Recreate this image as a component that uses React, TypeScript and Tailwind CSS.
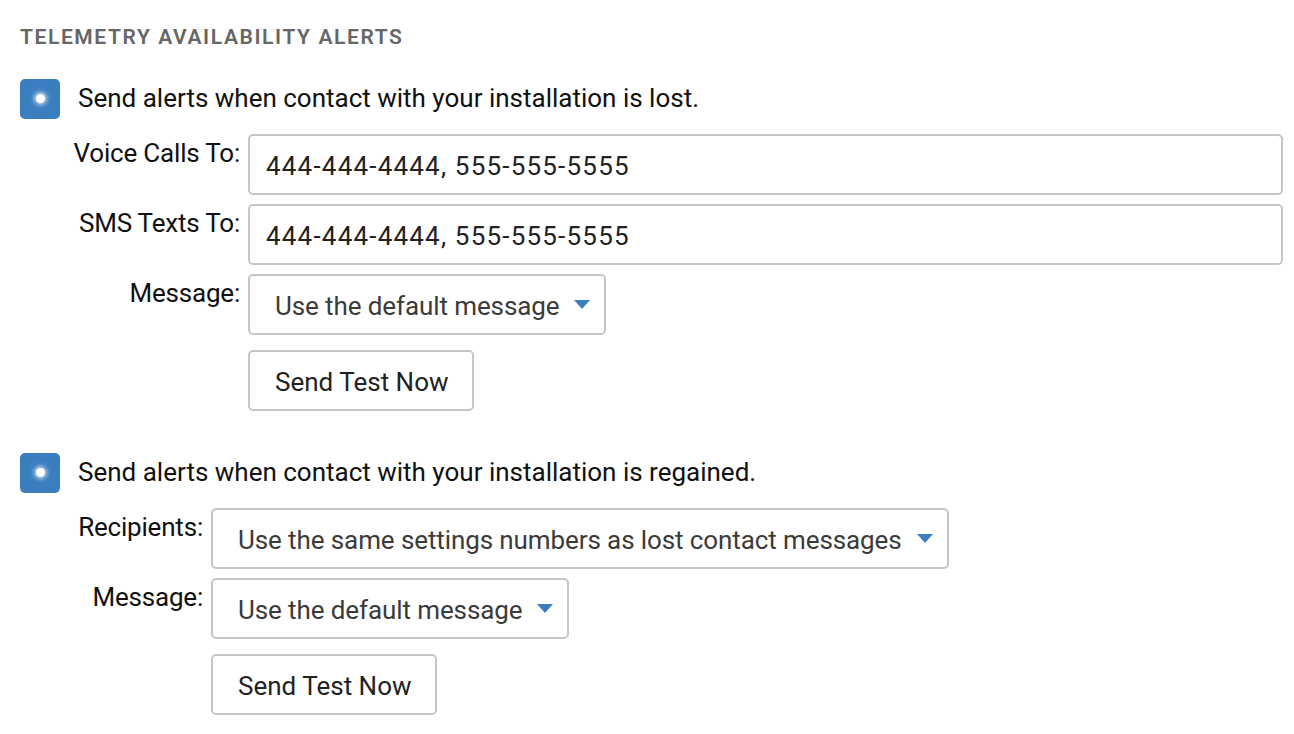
import { ReactNode } from 'react';

function Checkbox() {
  return (
    <div className="w-10 h-10 shrink-0 rounded-[5px] bg-[#3a7ebf] flex items-center justify-center">
      <div className="w-[9px] h-[9px] rounded-full bg-white shadow-[0_0_4px_2px_rgba(255,255,255,0.7)]" />
    </div>
  );
}

function Caret() {
  return (
    <svg width="16" height="9" viewBox="0 0 16 9" className="shrink-0">
      <path d="M0 0 H16 L8 9 Z" fill="#3a7ebf" />
    </svg>
  );
}

function Select({ label }: { label: string }) {
  return (
    <div className="h-[61px] inline-flex items-center gap-[15px] pl-[25px] pr-[14px] border-2 border-[#c6c6c6] rounded-[5px] text-[#3b3b3b] w-fit">
      <span className="pt-1 tracking-[-0.1px]">{label}</span>
      <Caret />
    </div>
  );
}

function TextInput({ value }: { value: string }) {
  return (
    <div className="h-[61px] flex items-center pl-4 pt-1 border-2 border-[#c6c6c6] rounded-[5px] text-[#222] tracking-[1.2px]">
      {value}
    </div>
  );
}

function Row({ label, width, children }: { label?: string; width: string; children: ReactNode }) {
  return (
    <div className="flex gap-2">
      <div className={`${width} shrink-0 text-right text-[#111] tracking-[-0.2px]`}>{label}</div>
      <div className="flex-1 min-w-0">{children}</div>
    </div>
  );
}

function TestButton() {
  return (
    <div className="h-[61px] w-fit flex items-center pl-[25px] pr-[23px] pt-1 border-2 border-[#c6c6c6] rounded-[5px] text-[#222]">
      Send Test Now
    </div>
  );
}

export default function App() {
  return (
    <div className="min-h-screen bg-white pl-5 pr-[11px] pt-[22px] text-[26px]" style={{ fontFamily: 'Roboto, "Noto Sans", sans-serif' }}>
      <h2 className="text-[21px] font-semibold tracking-[1.6px] text-[#666]">TELEMETRY AVAILABILITY ALERTS</h2>

      <div className="mt-[25px] flex items-center gap-[18px]">
        <Checkbox />
        <span className="text-[#111]">Send alerts when contact with your installation is lost.</span>
      </div>
      <div className="mt-[15px] flex flex-col gap-[9px]">
        <Row label="Voice Calls To:" width="w-[220px]">
          <TextInput value="444-444-4444, 555-555-5555" />
        </Row>
        <Row label="SMS Texts To:" width="w-[220px]">
          <TextInput value="444-444-4444, 555-555-5555" />
        </Row>
        <Row label="Message:" width="w-[220px]">
          <Select label="Use the default message" />
        </Row>
        <div className="mt-[6px]">
          <Row width="w-[220px]">
            <TestButton />
          </Row>
        </div>
      </div>

      <div className="mt-[42px] flex items-center gap-[18px]">
        <Checkbox />
        <span className="text-[#111]">Send alerts when contact with your installation is regained.</span>
      </div>
      <div className="mt-[15px] flex flex-col gap-[9px]">
        <Row label="Recipients:" width="w-[183px]">
          <Select label="Use the same settings numbers as lost contact messages" />
        </Row>
        <Row label="Message:" width="w-[183px]">
          <Select label="Use the default message" />
        </Row>
        <div className="mt-[6px]">
          <Row width="w-[183px]">
            <TestButton />
          </Row>
        </div>
      </div>
    </div>
  );
}
